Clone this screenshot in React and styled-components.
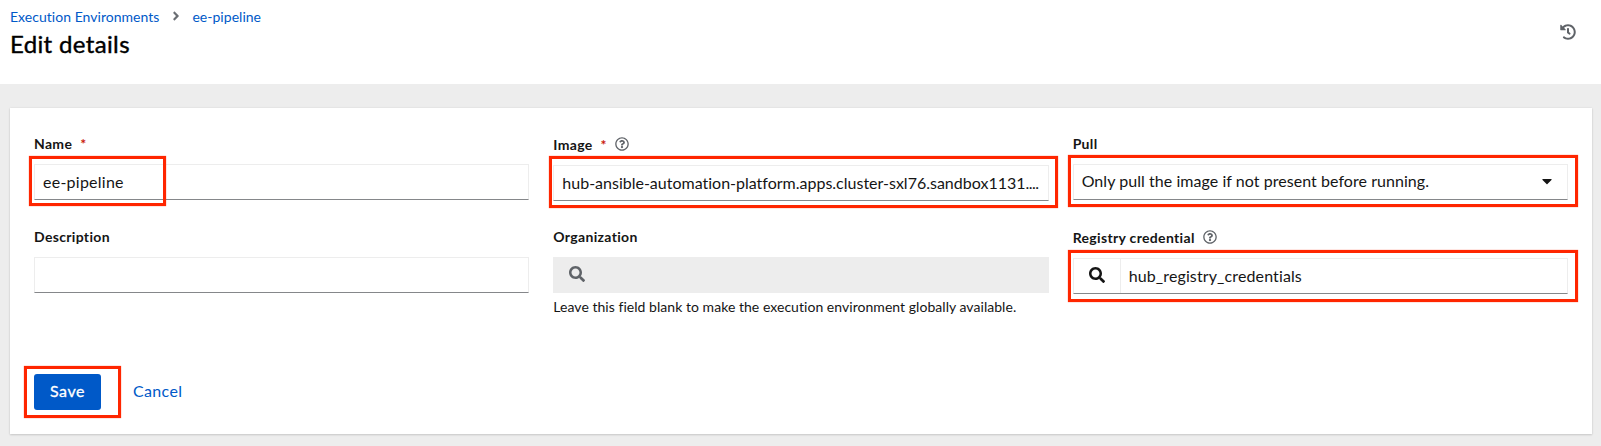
import React from "react";
import styled, { createGlobalStyle } from "styled-components";
import { FaSearch, FaHistory, FaCaretDown, FaAngleRight, FaRegQuestionCircle } from "react-icons/fa";

const GlobalStyle = createGlobalStyle`
  * { box-sizing: border-box; }
  body { margin: 0; background: #ededed; color: #151515; font-family: Lato, "Open Sans", sans-serif; font-size: 16px; font-variant-ligatures: none; }
  input, button { font: inherit; color: inherit; }
`;

const Page = styled.div`
  height: 446px;
  overflow: hidden;
  background: #ededed;
`;

const Header = styled.header`
  display: flex;
  justify-content: space-between;
  height: 84px;
  padding: 5px 25px 0 10px;
  background: #fff;
`;

const Breadcrumb = styled.nav`
  display: flex;
  align-items: center;
  height: 22px;
  font-size: 14px;
  svg { margin: 0 9px 0 10px; font-size: 14px; color: #6a6e73; }
`;

const Crumb = styled.a`
  color: #0059c8;
  letter-spacing: 0.03px;
`;

const Title = styled.h1`
  margin: 0;
  font-size: 24px;
  line-height: 34px;
  font-weight: 400;
  color: #000;
  -webkit-text-stroke: 0.4px #000;
  letter-spacing: 0.35px;
`;

const HistoryButton = styled.button`
  align-self: flex-start;
  display: flex;
  margin-top: 19px;
  padding: 0;
  border: 0;
  background: none;
  color: #5f6368;
  font-size: 16px;
`;

const Card = styled.main`
  display: flex;
  flex-direction: column;
  justify-content: space-between;
  height: 326px;
  margin: 24px 9px 0 10px;
  padding: 24px;
  background: #fff;
  box-shadow: 0 1px 2px rgba(3, 3, 3, 0.14), 0 0 2px rgba(3, 3, 3, 0.08);
`;

const Fields = styled.div`
  display: grid;
  grid-template-columns: repeat(3, minmax(0, 1fr));
  grid-template-rows: 69px auto;
  gap: 24px;
`;

const Field = styled.div`
  display: flex;
  flex-direction: column;
`;

const Label = styled.label`
  display: flex;
  align-items: center;
  height: ${(p) => (p.$help ? 33 : 32)}px;
  padding-bottom: 9px;
  font-size: 14px;
  font-weight: 700;
  color: #151515;
  letter-spacing: 0.33px;
  svg { margin-left: 8px; font-size: 14px; color: #5f6368; }
`;

const Required = styled.span`
  margin-left: 8px;
  letter-spacing: 0;
  color: #c9190b;
`;

const Control = styled.div`
  position: relative;
  display: flex;
  align-items: center;
  height: 36px;
  border: 1px solid #ededed;
  border-bottom-color: #85878a;
  background: #fff;
`;

const DisabledControl = styled(Control)`
  border-color: #ededed;
  background: #ededed;
  color: #5f6368;
`;

const Value = styled.span`
  flex: 1;
  padding: 0 8px ${(p) => p.$lift || 2}px;
  overflow: hidden;
  white-space: nowrap;
  letter-spacing: ${(p) => p.$spacing || 0}px;
`;

const Dots = styled.span`
  letter-spacing: -0.5px;
`;

const Caret = styled(FaCaretDown)`
  margin: 0 12px 2px 0;
  font-size: 16px;
`;

const LookupIcon = styled.span`
  display: flex;
  align-items: center;
  align-self: stretch;
  width: 47px;
  padding: 0 0 2px 15px;
  border-right: 1px solid ${(p) => (p.$plain ? "transparent" : "#ededed")};
`;

const Helper = styled.p`
  margin: 3px 0 0;
  font-size: 14px;
  line-height: 21px;
  letter-spacing: 0.04px;
`;

const Actions = styled.div`
  position: relative;
  display: flex;
  align-items: center;
  gap: 32px;
`;

const SaveButton = styled.button`
  width: 67px;
  height: 36px;
  padding: 0 0 3px;
  border: 0;
  border-radius: 3px;
  background: #0059c8;
  color: #fff;
  -webkit-text-stroke: 0.3px #fff;
  letter-spacing: 0.6px;
`;

const CancelButton = styled.button`
  padding: 0 0 3px;
  border: 0;
  background: none;
  color: #0059c8;
  letter-spacing: 0.35px;
`;

const Highlight = styled.span`
  position: absolute;
  top: ${(p) => p.$top}px;
  left: ${(p) => p.$left}px;
  width: ${(p) => p.$width}px;
  height: ${(p) => p.$height}px;
  border: 3px solid #ff2600;
  box-shadow: 0 0 1px rgba(255, 38, 0, 0.7);
  pointer-events: none;
`;

export default function App() {
  return (
    <Page>
      <GlobalStyle />
      <Header>
        <div>
          <Breadcrumb>
            <Crumb>Execution Environments</Crumb>
            <FaAngleRight />
            <Crumb>ee-pipeline</Crumb>
          </Breadcrumb>
          <Title>Edit details</Title>
        </div>
        <HistoryButton aria-label="History"><FaHistory /></HistoryButton>
      </Header>
      <Card>
        <Fields>
          <Field>
            <Label>Name<Required>*</Required></Label>
            <Control>
              <Value $spacing={0.25}>ee-pipeline</Value>
              <Highlight $top={-9} $left={-6} $width={137} $height={50} />
            </Control>
          </Field>
          <Field>
            <Label $help>Image<Required>*</Required><FaRegQuestionCircle /></Label>
            <Control>
              <Value>hub-ansible-automation-platform.apps.cluster-sxl76.sandbox1131<Dots>....</Dots></Value>
              <Highlight $top={-10} $left={-5} $width={509} $height={52} />
            </Control>
          </Field>
          <Field>
            <Label>Pull</Label>
            <Control>
              <Value $lift={3} $spacing={0.05}>Only pull the image if not present before running.</Value>
              <Caret />
              <Highlight $top={-10} $left={-6} $width={510} $height={52} />
            </Control>
          </Field>
          <Field>
            <Label>Description</Label>
            <Control />
          </Field>
          <Field>
            <Label>Organization</Label>
            <DisabledControl>
              <LookupIcon $plain><FaSearch /></LookupIcon>
            </DisabledControl>
            <Helper>Leave this field blank to make the execution environment globally available.</Helper>
          </Field>
          <Field>
            <Label $help>Registry credential<FaRegQuestionCircle /></Label>
            <Control>
              <LookupIcon><FaSearch /></LookupIcon>
              <Value $spacing={0.12}>hub_registry_credentials</Value>
              <Highlight $top={-9} $left={-6} $width={510} $height={52} />
            </Control>
          </Field>
        </Fields>
        <Actions>
          <SaveButton>Save</SaveButton>
          <CancelButton>Cancel</CancelButton>
          <Highlight $top={-8} $left={-10} $width={97} $height={52} />
        </Actions>
      </Card>
    </Page>
  );
}
